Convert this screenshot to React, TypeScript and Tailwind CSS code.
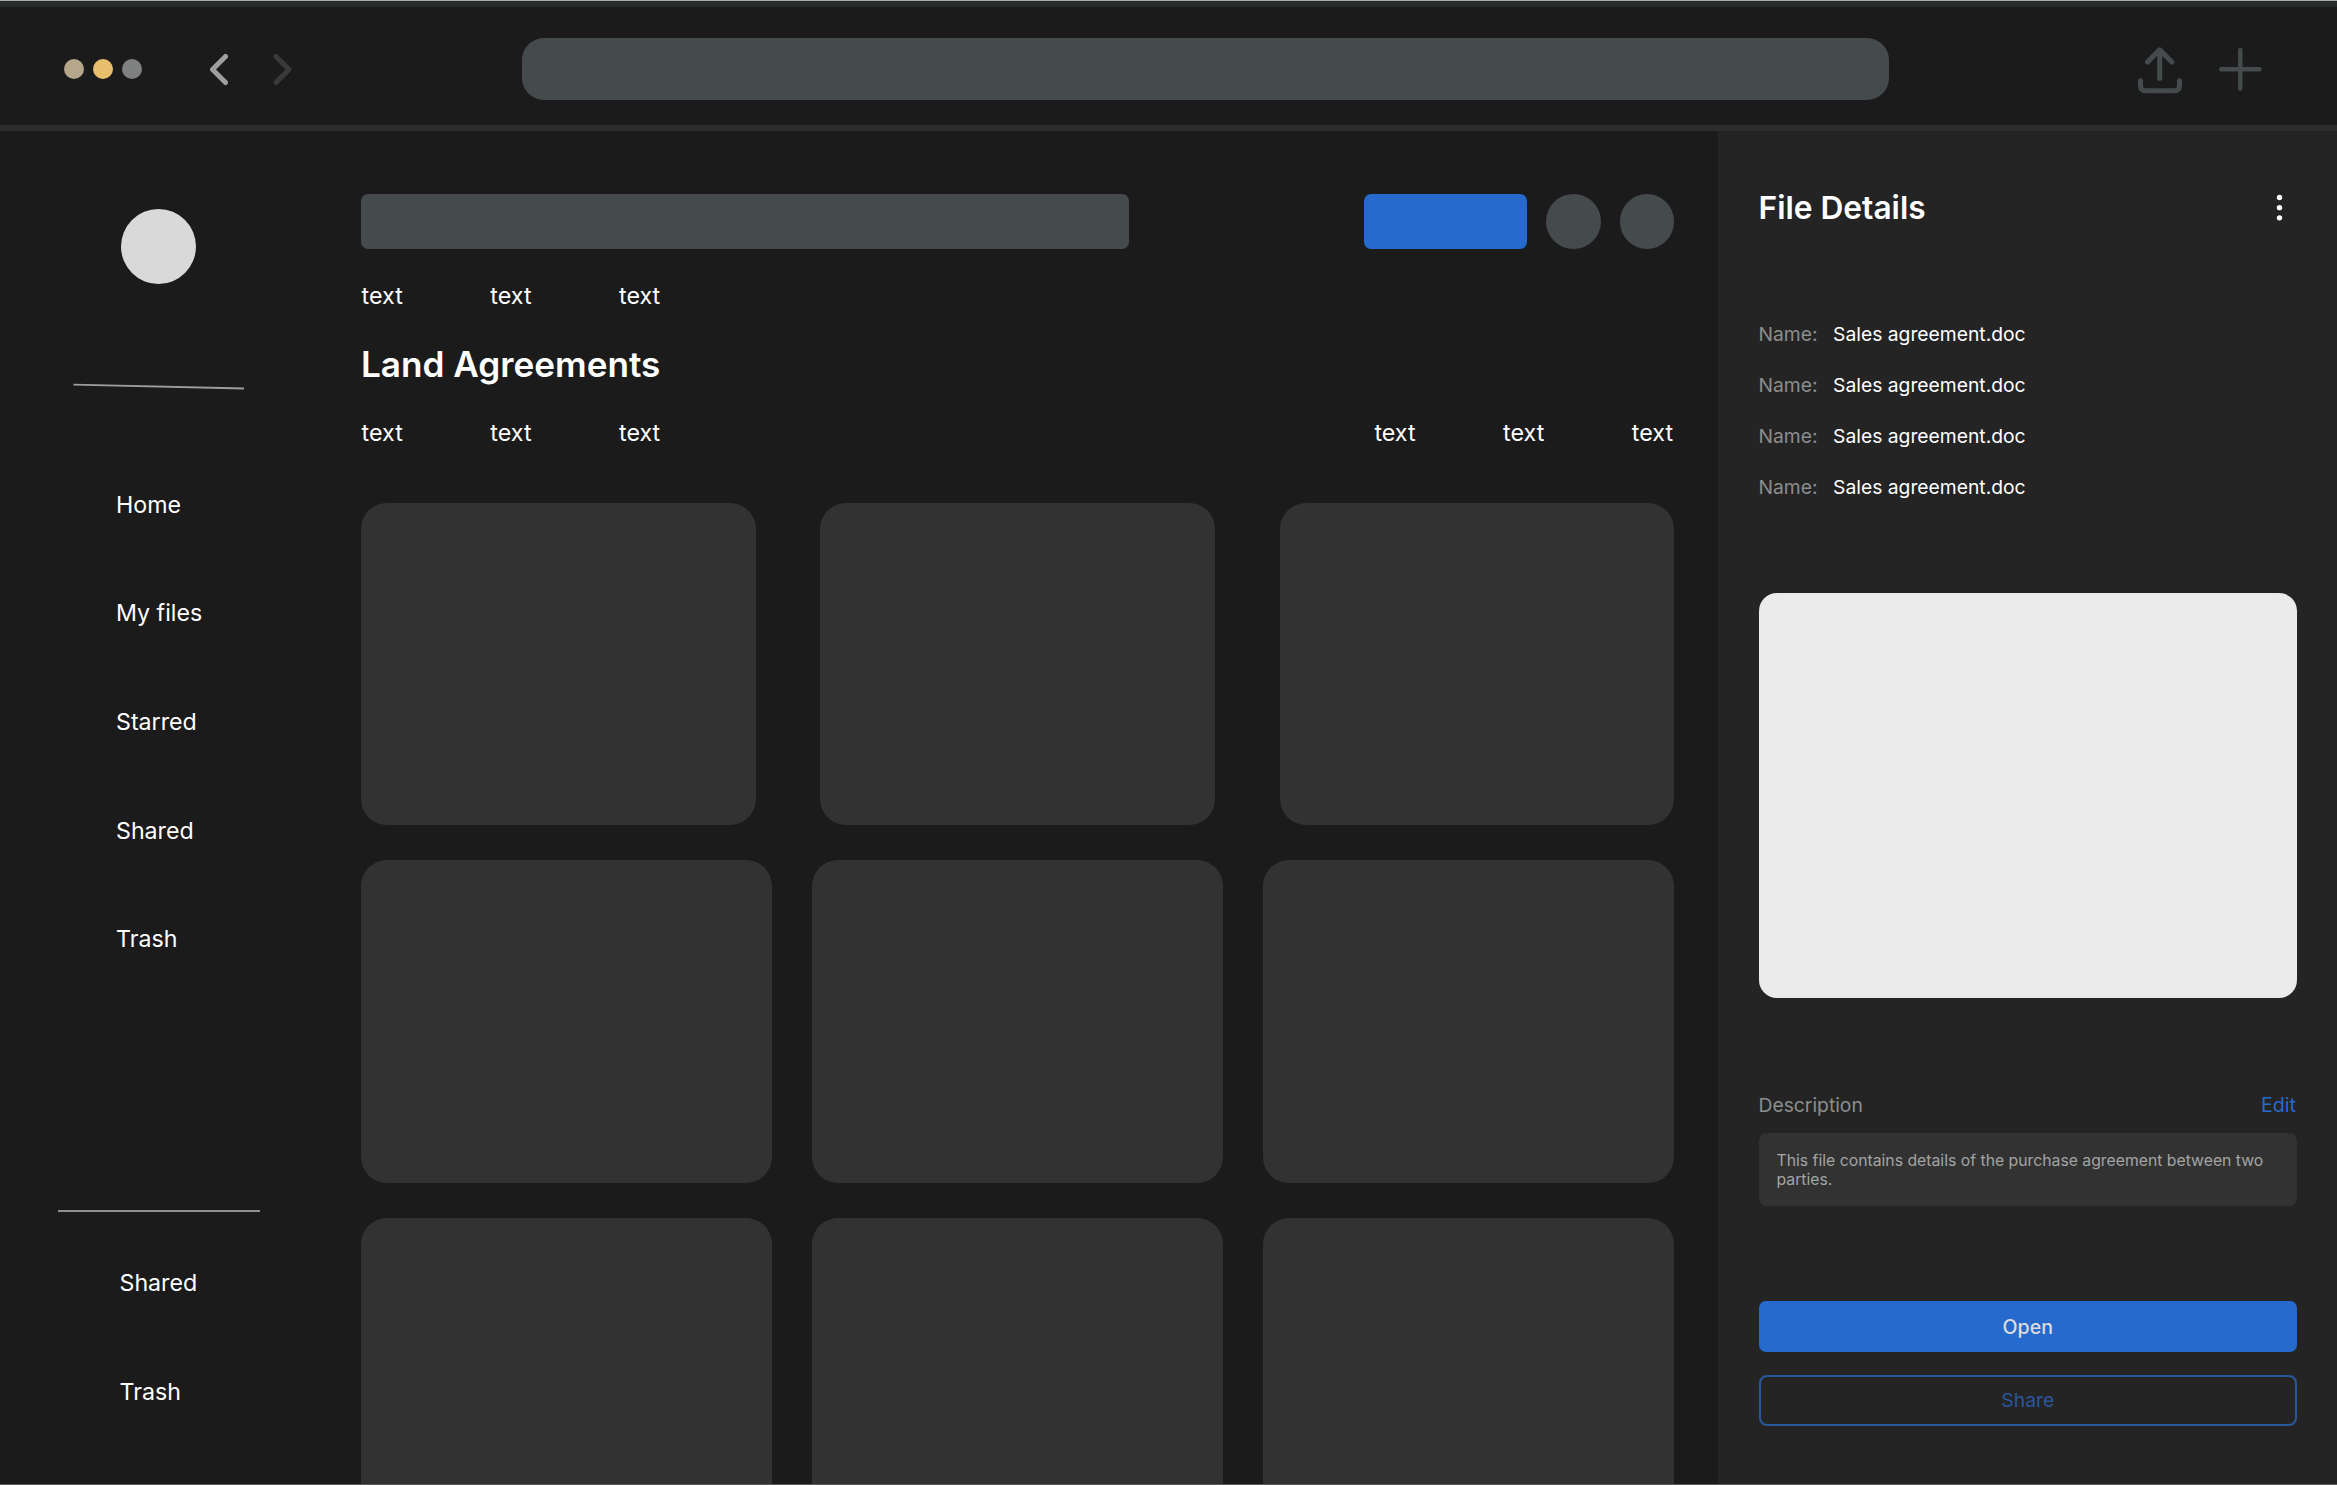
import React from "react";

const NAV = ["Home", "My files", "Starred", "Shared", "Trash"];
const NAV_BOTTOM = ["Shared", "Trash"];
const DETAILS = [1, 2, 3, 4];

function BrowserBar() {
  return (
    <header className="box-border flex h-[131px] shrink-0 flex-col">
      <div className="h-px bg-[#a9adab]" />
      <div className="h-1.5 bg-[#2a2c2b]" />
      <div className="flex h-[117.5px] items-start">
        <div className="ml-16 mt-[52px] flex gap-[9px]">
          <span className="size-5 rounded-full bg-[#b5a68c]" />
          <span className="size-5 rounded-full bg-[#e8be6c]" />
          <span className="size-5 rounded-full bg-[#7f8180]" />
        </div>
        <div className="ml-[68px] mt-[46px] flex gap-[45px]">
          <svg width="18" height="33" viewBox="0 0 18 33" fill="none" stroke="#a09f9f" strokeWidth="5" strokeLinecap="round" strokeLinejoin="round">
            <path d="M15.5 3.5 2.5 16.5l13 13" />
          </svg>
          <svg width="19" height="33" viewBox="0 0 19 33" fill="none" stroke="#383a3a" strokeWidth="5" strokeLinecap="round" strokeLinejoin="round">
            <path d="M3 3.5l13 13-13 13" />
          </svg>
        </div>
        <div className="ml-[230px] mt-[31px] h-[62px] w-[1367px] rounded-[22px] bg-[#454a4c]" />
        <div className="ml-[249px] mt-10 flex gap-[37px] text-[#454a4c]">
          <svg width="44" height="47" viewBox="0 0 44 47" fill="none" stroke="currentColor" strokeWidth="5" strokeLinecap="round" strokeLinejoin="round">
            <path d="M21.7 31.5V3M9.5 15 21.7 2.9l12.2 12.1" />
            <path d="M2.5 33.8v5q0 5 5 5h29q5 0 5-5v-5" />
          </svg>
          <svg width="43" height="45" viewBox="0 0 43 45" fill="none" stroke="currentColor" strokeWidth="4.4" strokeLinecap="round">
            <path d="M21.3 2.9v38.6M2.2 22.3h38.4" />
          </svg>
        </div>
      </div>
      <div className="h-[6.5px] bg-[#2c2c2c]" />
    </header>
  );
}

function Sidebar() {
  return (
    <aside className="flex w-[361px] shrink-0 flex-col text-[23.2px] leading-[29px]">
      <div className="ml-[121px] mt-[78px] size-[75px] rounded-full bg-[#d9d9d9]" />
      <svg className="ml-[73px] mt-[98px] h-[10px] w-[172px]" viewBox="0 0 172 10" fill="none">
        <path d="M0.5 2.7 171 6.5" stroke="#9c9f9e" strokeWidth="1.8" />
      </svg>
      <nav className="ml-[116px] mt-[98.6px] flex flex-col gap-[79.7px]">
        {NAV.map((n) => (
          <a key={n}>{n}</a>
        ))}
      </nav>
      <div className="ml-[57.5px] mt-[256px] h-0.5 w-[202px] bg-[#8f9190]" />
      <nav className="ml-[119.5px] mt-[56.7px] flex flex-col gap-[79.7px]">
        {NAV_BOTTOM.map((n) => (
          <a key={n}>{n}</a>
        ))}
      </nav>
    </aside>
  );
}

function Links() {
  return (
    <div className="flex gap-[87.5px] text-[23.28px] leading-[29px]">
      <span>text</span>
      <span>text</span>
      <span>text</span>
    </div>
  );
}

function CardRow({ className }: { className: string }) {
  return (
    <div className={"grid shrink-0 grid-cols-3 " + className}>
      <div className="h-[322.3px] rounded-[26px] bg-[#323232]" />
      <div className="h-[322.3px] rounded-[26px] bg-[#323232]" />
      <div className="h-[322.3px] rounded-[26px] bg-[#323232]" />
    </div>
  );
}

function Main() {
  return (
    <main className="flex w-[1313.2px] shrink-0 flex-col overflow-hidden pt-[63px]">
      <div className="flex h-[55px] shrink-0 items-center">
        <div className="h-[54.6px] w-[768px] rounded-[7px] bg-[#454a4c]" />
        <div className="ml-auto flex gap-[19px]">
          <button className="h-[54.6px] w-[163px] rounded-[7px] bg-[#266acd]" />
          <span className="size-[54.6px] rounded-full bg-[#454a4c]" />
          <span className="size-[54.6px] rounded-full bg-[#454a4c]" />
        </div>
      </div>
      <div className="mt-8 pl-[0.6px]">
        <Links />
      </div>
      <h1 className="mt-[33px] text-[35.15px] font-semibold leading-[43px]">Land Agreements</h1>
      <div className="mt-8 flex shrink-0 justify-between pl-[0.6px] pr-[1.2px]">
        <Links />
        <Links />
      </div>
      <CardRow className="mt-[55.5px] gap-[64.7px]" />
      <CardRow className="mt-[35.5px] gap-[40.3px]" />
      <CardRow className="mt-[35.3px] gap-[40.3px]" />
    </main>
  );
}

function DetailsPanel() {
  return (
    <aside className="ml-auto flex w-[619px] shrink-0 flex-col bg-[#242424] pl-[40.5px] pr-10 text-[19.3px] leading-6">
      <div className="mt-[57px] flex items-center justify-between">
        <h2 className="text-[31.7px] font-semibold leading-[39px]">File Details</h2>
        <svg width="35" height="35" viewBox="0 0 24 24" fill="white">
          <circle cx="12" cy="5.1" r="1.85" />
          <circle cx="12" cy="12.1" r="1.85" />
          <circle cx="12" cy="19.1" r="1.85" />
        </svg>
      </div>
      <dl className="mt-[95px] flex flex-col gap-[27px]">
        {DETAILS.map((d) => (
          <div key={d} className="flex gap-[15.5px]">
            <dt className="text-[#8c8e8d]">Name:</dt>
            <dd>Sales agreement.doc</dd>
          </div>
        ))}
      </dl>
      <div className="mt-[94.3px] h-[404.7px] rounded-[18px] bg-[#ebebeb]" />
      <div className="mt-[95px] flex justify-between pr-px">
        <span className="text-[#8c8e8d]">Description</span>
        <a className="text-[19.6px] text-[#266acd]">Edit</a>
      </div>
      <p className="mt-4 h-[73px] rounded-lg bg-[#323232] px-[18px] pt-[18px] text-[15.78px] leading-[19px] text-[#a3a4a4]">
        This file contains details of the purchase agreement between two parties.
      </p>
      <button className="mt-[95.3px] flex h-[51px] items-center justify-center rounded-[7px] bg-[#266acd] pt-px text-[19.6px] font-medium text-[#dcdcdc]">
        Open
      </button>
      <button className="mt-[22.7px] flex h-[51px] items-center justify-center rounded-lg border-2 border-[#2a579c] text-[#2a579c]">
        Share
      </button>
    </aside>
  );
}

export default function App() {
  return (
    <div className="flex h-[1485px] w-[2337px] flex-col overflow-hidden bg-[#1b1b1b] font-['Inter',sans-serif] text-white">
      <BrowserBar />
      <div className="flex min-h-0 flex-1">
        <Sidebar />
        <Main />
        <DetailsPanel />
      </div>
      <div className="h-px shrink-0 bg-[#5a5a5a]" />
    </div>
  );
}
